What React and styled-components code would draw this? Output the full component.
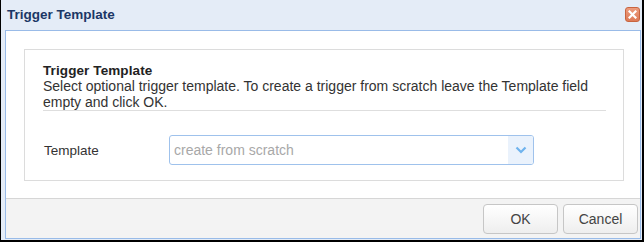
import React from "react";
import styled, { createGlobalStyle } from "styled-components";

const Global = createGlobalStyle`
  html, body { margin: 0; padding: 0; background: #ffffff; }
  body { font-family: "Liberation Sans", Arial, sans-serif; }
  * { box-sizing: border-box; }
`;

const Window = styled.div`
  width: 644px;
  height: 242px;
  background: #e4ecf7;
  border-left: 1px solid #000;
  border-right: 2px solid #000;
  border-bottom: 2px solid #000;
  display: flex;
  flex-direction: column;
  padding: 0 1px 1px 4px;
`;

const Header = styled.div`
  height: 30px;
  flex: 0 0 30px;
  display: flex;
  align-items: center;
  justify-content: space-between;
  padding: 0 1px 1px 2px;
`;

const Title = styled.div`
  font-family: "Liberation Sans", Arial, sans-serif;
  font-weight: 700;
  font-size: 13.5px;
  color: #1b3766;
`;

const CloseTool = styled.button`
  width: 15px;
  height: 15px;
  padding: 0;
  margin: 0;
  border: 1px solid #c8643f;
  border-radius: 3px;
  background: linear-gradient(#ec9c7e, #dd7a57);
  display: flex;
  align-items: center;
  justify-content: center;
  cursor: pointer;
`;

const Body = styled.div`
  flex: 1;
  border: 1px solid #99bbe8;
  background: #fff;
  display: flex;
  flex-direction: column;
`;

const Main = styled.div`
  flex: 1;
  padding: 18px 16px 0 18px;
`;

const Fieldset = styled.div`
  border: 1px solid #dcdcdc;
  height: 132px;
  padding: 12px 17px 0 18px;
`;

const SectionTitle = styled.div`
  font-weight: 700;
  font-size: 13.5px;
  letter-spacing: 0.1px;
  line-height: 17px;
  color: #222;
`;

const Description = styled.div`
  font-size: 14px;
  line-height: 15.5px;
  color: #333;
  border-bottom: 1px solid #dedede;
`;

const Row = styled.div`
  display: flex;
  align-items: center;
  margin-top: 24px;
`;

const Label = styled.div`
  width: 126px;
  padding-left: 1px;
  font-size: 13.5px;
  color: #333;
`;

const Combo = styled.div`
  width: 365px;
  height: 30px;
  border: 1px solid #9fc2ec;
  border-radius: 3px;
  display: flex;
  overflow: hidden;
`;

const ComboInput = styled.input`
  flex: 1;
  border: none;
  outline: none;
  padding: 0 0 0 4px;
  font-family: "Liberation Sans", Arial, sans-serif;
  font-size: 14px;
  color: #333;
  background: transparent;
  &::placeholder { color: #a8a8a8; }
`;

const Trigger = styled.div`
  width: 25px;
  background: #eaf2fc;
  display: flex;
  align-items: center;
  justify-content: center;
`;

const Footer = styled.div`
  flex: 0 0 40px;
  border-top: 1px solid #d6d6d6;
  background: #f3f3f3;
  display: flex;
  justify-content: flex-end;
  align-items: flex-start;
  gap: 5px;
  padding: 5px 2px 0 0;
`;

const Button = styled.button`
  width: ${(p) => p.$w}px;
  height: 30px;
  border: 1px solid #c6c6c6;
  border-radius: 4px;
  background: linear-gradient(#ffffff, #eeeeee);
  font-family: "Liberation Sans", Arial, sans-serif;
  font-size: 14px;
  color: #444;
  padding: 0;
  cursor: pointer;
`;

export default function App() {
  return (
    <>
      <Global />
      <Window>
        <Header>
          <Title>Trigger Template</Title>
          <CloseTool aria-label="Close">
            <svg width="9" height="9" viewBox="0 0 9 9">
              <path d="M1.5 1.5 L7.5 7.5 M7.5 1.5 L1.5 7.5" stroke="#fff" strokeWidth="2.2" strokeLinecap="square" />
            </svg>
          </CloseTool>
        </Header>
        <Body>
          <Main>
            <Fieldset>
              <SectionTitle>Trigger Template</SectionTitle>
              <Description>
                Select optional trigger template. To create a trigger from scratch leave the Template field empty and click OK.
              </Description>
              <Row>
                <Label>Template</Label>
                <Combo>
                  <ComboInput placeholder="create from scratch" />
                  <Trigger>
                    <svg width="12" height="8" viewBox="0 0 12 8">
                      <path d="M1.5 1.5 L6 6 L10.5 1.5" fill="none" stroke="#6fb3ee" strokeWidth="2.2" />
                    </svg>
                  </Trigger>
                </Combo>
              </Row>
            </Fieldset>
          </Main>
          <Footer>
            <Button $w={75}>OK</Button>
            <Button $w={75}>Cancel</Button>
          </Footer>
        </Body>
      </Window>
    </>
  );
}
